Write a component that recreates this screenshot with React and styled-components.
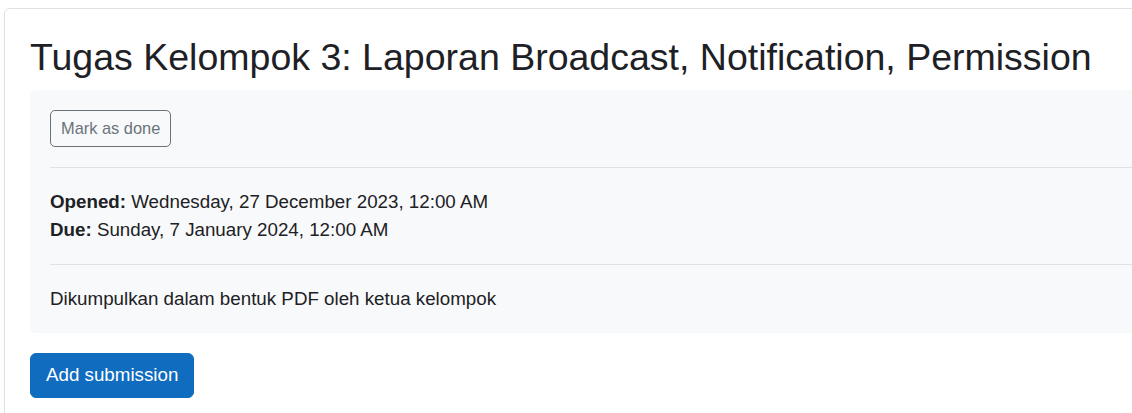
import React from "react";
import styled, { createGlobalStyle } from "styled-components";

const Global = createGlobalStyle`
  html, body { margin: 0; padding: 0; background: #fff; overflow: hidden; }
  body {
    font-family: "Liberation Sans", Arial, sans-serif;
    font-size: 18.75px;
    line-height: 1.5;
    color: #1d2125;
  }
  * { box-sizing: border-box; }
`;

const Page = styled.div`
  padding: 8px 0 0 4px;
  width: 100vw;
  height: 100vh;
  overflow: hidden;
`;

const Card = styled.section`
  width: 1200px;
  border: 1px solid #dee2e6;
  border-radius: 6px;
  padding: 26px 25px 25px;
  background: #fff;
  min-height: 420px;
`;

const Title = styled.h2`
  margin: 0 0 10px;
  font-size: 37.5px;
  font-weight: 400;
  line-height: 1.2;
  color: #1d2125;
`;

const InfoBox = styled.div`
  background: #f8f9fa;
  border-radius: 6px;
  padding: 20px;
`;

const Divider = styled.hr`
  margin: 20px 0;
  border: 0;
  border-top: 1px solid #dee2e6;
`;

const Button = styled.button`
  display: inline-block;
  font-family: inherit;
  cursor: pointer;
  border-radius: ${(p) => (p.$small ? "5px" : "6px")};
  font-size: ${(p) => (p.$small ? "16.4px" : "18.75px")};
  line-height: 1.5;
  padding: ${(p) => (p.$small ? "5px 10px" : "7.5px 15px")};
  color: ${(p) => (p.$primary ? "#fff" : "#6a737b")};
  background: ${(p) => (p.$primary ? "#0f6cbf" : "transparent")};
  border: 1px solid ${(p) => (p.$primary ? "#0f6cbf" : "#6a737b")};
`;

const DateLine = styled.div`
  strong { font-weight: 700; }
`;

const Description = styled.div``;

const Actions = styled.div`
  margin-top: 20px;
`;

export default function App() {
  return (
    <>
      <Global />
      <Page>
        <Card>
          <Title>Tugas Kelompok 3: Laporan Broadcast, Notification, Permission</Title>
          <InfoBox>
            <Button $small>Mark as done</Button>
            <Divider />
            <DateLine>
              <strong>Opened:</strong> Wednesday, 27 December 2023, 12:00 AM
            </DateLine>
            <DateLine>
              <strong>Due:</strong> Sunday, 7 January 2024, 12:00 AM
            </DateLine>
            <Divider />
            <Description>Dikumpulkan dalam bentuk PDF oleh ketua kelompok</Description>
          </InfoBox>
          <Actions>
            <Button $primary>Add submission</Button>
          </Actions>
        </Card>
      </Page>
    </>
  );
}
